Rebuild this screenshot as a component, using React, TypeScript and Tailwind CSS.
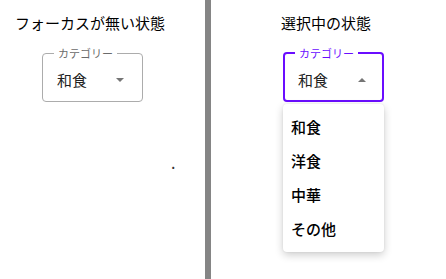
import React from 'react';

const FONT = "font-['Noto_Sans_CJK_JP','Noto_Sans',sans-serif]";

const Arrow = ({ up = false }: { up?: boolean }) => (
  <svg width="8" height="4" viewBox="0 0 8 4" className="shrink-0">
    <polygon points={up ? '0,4 8,4 4,0' : '0,0 8,0 4,4'} fill="#757575" />
  </svg>
);

const items = ['和食', '洋食', '中華', 'その他'];

export default function App() {
  return (
    <div className={`flex h-[279px] w-[446px] bg-white text-black ${FONT}`}>
      {/* left: not focused */}
      <div className="w-[205px] shrink-0 pl-[15px] pt-[11px]">
        <div className="text-[15px] leading-[24px]">フォーカスが無い状態</div>
        <fieldset className="ml-[27px] mt-[12px] w-[101px] rounded-[4px] border border-[#acacac] px-[11px]">
          <legend className="px-[4px] text-[11px] leading-[12px] text-[#6b6b6b]">カテゴリー</legend>
          <div className="flex h-[42px] items-center justify-between pl-[3px] pr-[7px]">
            <span className="text-[15px] leading-[24px] text-[#222]">和食</span>
            <Arrow />
          </div>
        </fieldset>
        <div className="ml-[156px] mt-[48px] text-[16px] leading-[24px] text-[#333]">.</div>
      </div>

      <div className="w-[6px] shrink-0 bg-[#858585]" />

      {/* right: focused, open */}
      <div className="flex-1 pl-[70px] pt-[11px]">
        <div className="text-[15px] leading-[24px]">選択中の状態</div>
        <fieldset className="ml-[2px] mt-[12px] w-[101px] rounded-[4px] border-2 border-[#6a0dff] px-[10px]">
          <legend className="px-[4px] text-[11px] leading-[12px] text-[#6a0dff]">カテゴリー</legend>
          <div className="flex h-[41px] items-center justify-between pl-[3px] pr-[6px]">
            <span className="text-[15px] leading-[24px] text-[#222]">和食</span>
            <Arrow up />
          </div>
        </fieldset>
        <ul className="ml-[2px] mt-[2px] w-[101px] rounded-[4px] bg-white py-[6px] shadow-[0_3px_8px_rgba(0,0,0,0.2),0_0_2px_rgba(0,0,0,0.08)]">
          {items.map((it) => (
            <li key={it} className="flex h-[34px] items-center pl-[8px] text-[15px] font-medium text-black">
              {it}
            </li>
          ))}
        </ul>
      </div>
    </div>
  );
}
